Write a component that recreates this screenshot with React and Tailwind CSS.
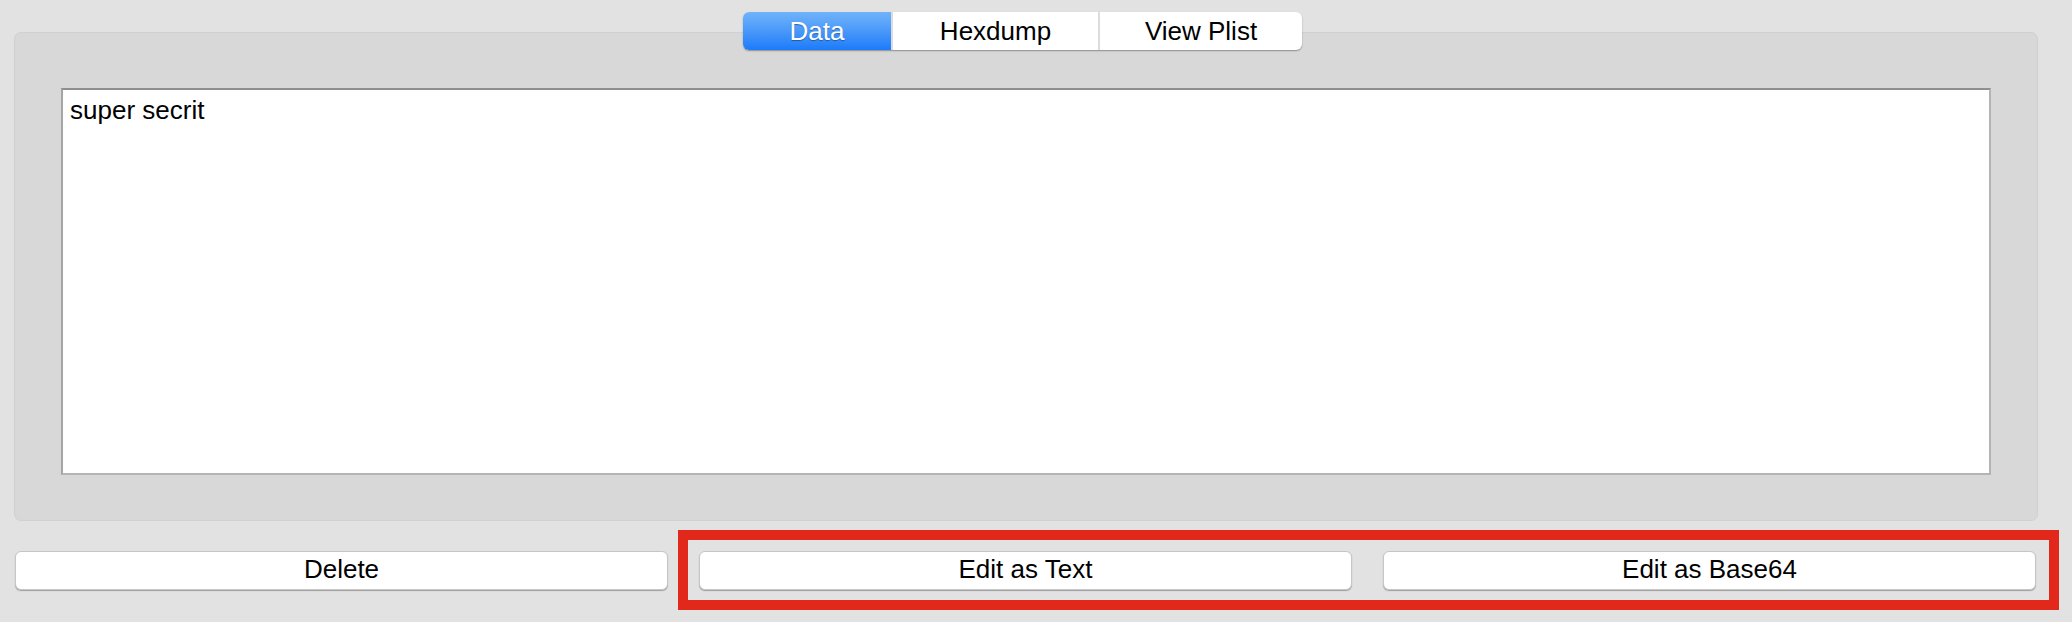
import React, { useState } from 'react';

const tabs = [
    { id: 'data', name: 'Data', width: 'w-[148px]' },
    { id: 'hex', name: 'Hexdump', width: 'w-[207px]' },
    { id: 'plist', name: 'View Plist', width: 'w-[204px]' },
];

const buttons = ['Delete', 'Edit as Text', 'Edit as Base64'];

const App = () => {
    const [active, setActive] = useState('data');
    const [text, setText] = useState('super secrit');

    return (
    <div className="relative w-[2072px] h-[622px] overflow-hidden bg-[#e2e2e2] font-['Liberation_Sans',Arial,sans-serif] text-black">

        {/* Segmented control */}
        <div className="relative z-10 flex pt-[12px] pl-[743px]">
            <div className="flex h-[38px] rounded-[6px] bg-white shadow-[0_1px_1.5px_rgba(0,0,0,0.35)]">
                {tabs.map((tab, i) => (
                    <button
                    key={tab.id}
                    onClick={() => setActive(tab.id)}
                    className={`flex h-full items-center justify-center text-[26px] leading-none ${tab.width}
                                ${i === 0 ? 'rounded-l-[6px]' : ''} ${i === tabs.length - 1 ? 'rounded-r-[6px]' : ''}
                                ${i > 0 ? 'border-l-2 border-[#dcdcdc]' : ''}
                                ${active === tab.id ? 'bg-gradient-to-b from-[#70b3f9] to-[#1a7bf9] text-white [text-shadow:0_1px_1px_rgba(0,0,0,0.35)]' : 'text-black'}`}
                    >
                        {tab.name}
                    </button>
                ))}
            </div>
        </div>

        {/* Panel */}
        <div className="-mt-[18px] ml-[14px] w-[2024px] h-[489px] rounded-[7px] border border-[#d0d0d0] bg-[#d8d8d8] px-[46px] pt-[55px]">
            <textarea
            value={text}
            onChange={(e) => setText(e.target.value)}
            className="block h-[387px] w-[1930px] resize-none border-2 border-[#b4b4b4] border-t-[#8f8f8f] border-l-[#a4a4a4] bg-white px-[7px] pt-[5px] text-[26px] leading-[30px] outline-none font-['Liberation_Sans',Arial,sans-serif]"
            />
        </div>

        {/* Bottom buttons */}
        <div className="mt-[30px] flex gap-[31px] pl-[15px]">
            {buttons.map((label) => (
                <button
                key={label}
                className="flex h-[39px] w-[653px] items-center justify-center rounded-[6px] border border-[#c6c6c6] bg-white pb-[3px] text-[26px] leading-none shadow-[0_1px_1px_rgba(0,0,0,0.3)]"
                >
                    {label}
                </button>
            ))}
        </div>

        {/* Red highlight annotation */}
        <div className="pointer-events-none absolute left-[678px] top-[530px] h-[80px] w-[1381px] border-[10px] border-[#e1281b]" />
    </div>
  );
};

export default App;
